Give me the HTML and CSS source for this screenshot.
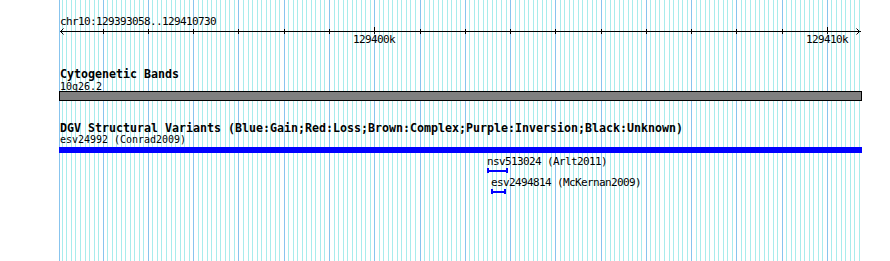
FILE: index.html
```html
<!DOCTYPE html>
<html>
<head>
<meta charset="utf-8">
<link rel="stylesheet" href="styles.css">
</head>
<body>
<div class="panel">
  <svg class="grid" width="890" height="261" shape-rendering="crispEdges">
    <path class="grid-minor" d=""></path>
    <path class="grid-major" d=""></path>
  </svg>
  <div class="tracks">
    <div class="ruler-label">chr10:129393058..129410730</div>
    <svg class="ruler" width="890" height="20" shape-rendering="crispEdges">
      <path class="axis" d="M60 4.5H861"></path>
      <path class="arrow" d="M63.5 1.5L60.5 4.5L63.5 7.5M856.5 1.5L859.5 4.5L856.5 7.5" shape-rendering="auto"></path>
      <path class="ticks" d="M103.5 2V7M148.5 2V7M193.5 2V7M238.5 2V7M284.5 2V7M329.5 2V7M420.5 2V7M465.5 2V7M510.5 2V7M555.5 2V7M601.5 2V7M646.5 2V7M691.5 2V7M736.5 2V7M782.5 2V7"></path>
      <path class="ticks" d="M374.5 0V7M827.5 0V7"></path>
      <text class="tick-label" x="353" y="16">129400k</text>
      <text class="tick-label" x="806" y="16">129410k</text>
    </svg>

    <div class="track-title">Cytogenetic Bands</div>
    <div class="feat-label band-label">10q26.2</div>
    <div class="band"></div>

    <div class="track-title">DGV Structural Variants (Blue:Gain;Red:Loss;Brown:Complex;Purple:Inversion;Black:Unknown)</div>
    <div class="feat-label">esv24992 (Conrad2009)</div>
    <div class="cnv"></div>

    <div class="feature first" style="margin-left: 487px;">
      <div class="feat-label">nsv513024 (Arlt2011)</div>
      <div class="ibeam" style="width: 21px;"><span class="ibeam-line"></span></div>
    </div>
    <div class="feature" style="margin-left: 491px;">
      <div class="feat-label">esv2494814 (McKernan2009)</div>
      <div class="ibeam" style="width: 15px;"><span class="ibeam-line"></span></div>
    </div>
  </div>
</div>
<script src="script.js"></script>
</body>
</html>
```

FILE: styles.css
```css
body {
  margin: 0;
  background: #ffffff;
}

.panel {
  position: relative;
  width: 890px;
  height: 261px;
  overflow: hidden;
  background: #ffffff;
  font-family: "DejaVu Sans Mono", "Liberation Mono", monospace;
  color: #000000;
}

.grid {
  position: absolute;
  left: 0;
  top: 0;
}

.grid-minor {
  stroke: #a8ecec;
  stroke-width: 1;
  fill: none;
}

.grid-major {
  stroke: #88c4ee;
  stroke-width: 1;
  fill: none;
}

.tracks {
  position: relative;
  padding-top: 16px;
}

.ruler-label {
  margin-left: 60px;
  font-size: 11px;
  letter-spacing: -0.62px;
  line-height: 11px;
  height: 11px;
  white-space: nowrap;
}

.ruler {
  display: block;
}

.axis,
.ticks,
.arrow {
  stroke: #000000;
  stroke-width: 1;
  fill: none;
}

.tick-label {
  font-family: "DejaVu Sans Mono", "Liberation Mono", monospace;
  font-size: 11px;
  letter-spacing: -0.62px;
  fill: #000000;
}

.track-title {
  margin: 20px 0 0 60px;
  font-size: 11.63px;
  font-weight: bold;
  line-height: 14px;
  height: 14px;
  white-space: nowrap;
}

.feat-label {
  font-size: 10px;
  letter-spacing: -0.02px;
  line-height: 9px;
  height: 9px;
  white-space: nowrap;
}

.feature .feat-label {
  font-size: 11px;
  letter-spacing: -0.62px;
}

.track-title + .feat-label {
  margin-left: 60px;
}

.band-label {
  margin-top: 1px;
}

.band {
  margin-left: 59px;
  width: 803px;
  height: 10px;
  box-sizing: border-box;
  background: #808080;
  border: 1px solid #000000;
}

.cnv {
  margin: 3px 0 0 59px;
  width: 803px;
  height: 6px;
  background: #0000ff;
}

.feature {
  margin-top: 5px;
}

.feature.first {
  margin-top: 4px;
}

.ibeam {
  display: flex;
  align-items: center;
  margin-top: 2px;
  height: 5px;
  box-sizing: border-box;
  border-left: 2px solid #0000ff;
  border-right: 2px solid #0000ff;
}

.ibeam-line {
  flex: 1;
  height: 2px;
  background: #0000ff;
}
```

FILE: script.js
```js
(function () {
  var start = 129393058;
  var end = 129410730;
  var left = 60;
  var width = 800;
  var scale = width / (end - start);
  var minor = '';
  var major = 'M59.5 0V261';
  for (var bp = 129393100; bp <= 129410700; bp += 100) {
    var x = Math.round(left + (bp - start) * scale) + 0.5;
    if (bp % 1000 === 0) {
      major += 'M' + x + ' 0V261';
    } else {
      minor += 'M' + x + ' 0V261';
    }
  }
  document.querySelector('.grid-minor').setAttribute('d', minor);
  document.querySelector('.grid-major').setAttribute('d', major);
})();
```
